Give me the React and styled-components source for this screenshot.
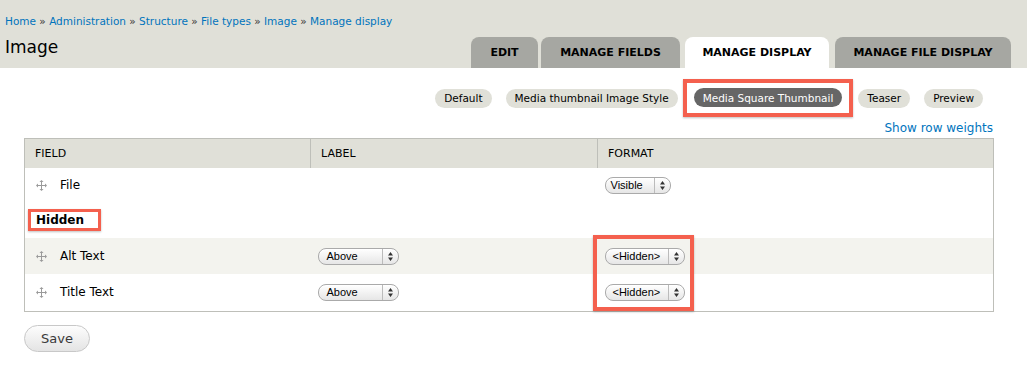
import React from "react";
import styled, {createGlobalStyle} from "styled-components";

const GlobalStyle = createGlobalStyle`
  body {
    margin: 0;
    background: #fff;
    font-family: "DejaVu Sans", Verdana, sans-serif;
    color: #000;
  }
`;

const Header = styled.header`
  background: #e0e0d8;
  height: 68px;
  padding-left: 5px;
  box-sizing: border-box;
`;

const Breadcrumb = styled.div`
  padding-top: 14px;
  font-size: 10.5px;
  line-height: 15px;
  color: #0074bd;

  span {
    color: #333;
  }
`;

const TitleRow = styled.div`
  display: flex;
  justify-content: space-between;
  margin-top: 8px;
  height: 31px;
`;

const Title = styled.h1`
  margin: 0;
  font-size: 17px;
  font-weight: normal;
  line-height: 20px;
`;

const Tabs = styled.nav`
  display: flex;
  align-items: flex-end;
  gap: 3px;
  padding-right: 16px;
`;

const Tab = styled.a`
  height: 31px;
  width: ${p => p.$w}px;
  box-sizing: border-box;
  display: flex;
  align-items: center;
  justify-content: center;
  border-radius: 8px 8px 0 0;
  background: ${p => p.$active ? "#fff" : "#a6a7a2"};
  font-size: 11px;
  font-weight: bold;
  color: #000;
  margin-left: ${p => p.$active ? 2 : 0}px;
  margin-right: ${p => p.$active ? 3 : 0}px;
`;

const Content = styled.main`
  padding: 11px 33px 0 24px;
`;

const SubTabs = styled.div`
  display: flex;
  justify-content: flex-end;
  align-items: center;
  padding-right: 4px;
`;

const Pill = styled.span`
  display: inline-flex;
  align-items: center;
  height: 19px;
  margin: 0 7px;
  padding: 0 9px;
  border-radius: 10px;
  background: ${p => p.$active ? "#666" : "#e0e0d8"};
  color: ${p => p.$active ? "#fff" : "#000"};
  font-size: 10.5px;
  white-space: nowrap;
`;

const Highlight = styled.div`
  display: flex;
  margin: 0 -2px;
  padding: 5px 0 6px;
  border: 4px solid #f4604e;
  box-shadow: 0 1px 2px rgba(0, 0, 0, 0.25);
`;

const WeightsRow = styled.div`
  display: flex;
  justify-content: flex-end;
  height: 21px;
  align-items: center;
  padding-right: 1px;
  font-size: 12px;
  color: #0074bd;
`;

const Table = styled.table`
  width: 970px;
  border-collapse: collapse;
  border: 1px solid #bebfb9;
  font-size: 12px;
`;

const Th = styled.th`
  height: 29px;
  padding: 0 10px;
  background: #e0e0d8;
  border-right: 1px solid #bebfb9;
  text-align: left;
  font-weight: normal;
  font-size: 11px;
  width: ${p => p.$w}px;
`;

const Row = styled.tr`
  background: ${p => p.$alt ? "#f3f3ee" : "#fff"};
  height: ${p => p.$h}px;
`;

const Td = styled.td`
  padding: 0 8px 0 9px;
  vertical-align: middle;
  position: relative;
`;

const SelectTd = styled(Td)`
  padding-left: 7px;
`;

const FieldName = styled.div`
  display: flex;
  align-items: center;
  gap: 13px;
  padding-left: 2px;
`;

const RegionLabel = styled.span`
  display: inline-block;
  margin-left: -6px;
  padding: 1px 14px 0 5px;
  border: 3px solid #f4604e;
  font-weight: bold;
  line-height: 15px;
  box-shadow: 0 1px 2px rgba(0, 0, 0, 0.25);
`;

const Select = styled.span`
  display: inline-flex;
  align-items: stretch;
  height: 17px;
  width: ${p => p.$w}px;
  box-sizing: border-box;
  border: 1px solid #aaa;
  border-radius: 8px;
  background: linear-gradient(#fff, #e6e6e6);
  font-family: "Liberation Sans", Arial, sans-serif;
  font-size: 11px;
  color: #000;
  box-shadow: inset 0 1px 0 #fff;
`;

const SelectValue = styled.span`
  flex: 1;
  display: flex;
  align-items: center;
  padding-left: ${p => p.$pad}px;
`;

const SelectArrows = styled.span`
  width: 15px;
  border-left: 1px solid #bbb;
  display: flex;
  align-items: center;
  justify-content: center;
`;

const HiddenBox = styled.div`
  position: absolute;
  left: -5px;
  top: -3px;
  width: 93px;
  height: 68px;
  border: 4px solid #f4604e;
  box-shadow: 0 1px 2px rgba(0, 0, 0, 0.25);
  pointer-events: none;
`;

const SaveButton = styled.button`
  margin-top: 13px;
  width: 66px;
  height: 27px;
  border: 1px solid #c8c8c8;
  border-radius: 14px;
  background: linear-gradient(#fdfdfd, #e4e4e4);
  font-family: "DejaVu Sans", Verdana, sans-serif;
  font-size: 13px;
  color: #3a3a3a;
  padding: 0;
`;

const DragIcon = () => (
    <svg width="11" height="11" viewBox="0 0 11 11">
        <g stroke="#9a9a9a" strokeWidth="1" fill="none">
            <path d="M5.5 1v9M1 5.5h9"/>
        </g>
        <g fill="#9a9a9a">
            <path d="M5.5 0l2 2h-4zM5.5 11l2-2h-4zM0 5.5l2-2v4zM11 5.5l-2-2v4z"/>
        </g>
    </svg>
);

const UpDown = () => (
    <svg width="5" height="9" viewBox="0 0 5 9">
        <path d="M2.5 0L5 3.5H0zM2.5 9L5 5.5H0z" fill="#333"/>
    </svg>
);

const Dropdown = ({value, width, pad = 8}) => (
    <Select $w={width}>
        <SelectValue $pad={pad}>{value}</SelectValue>
        <SelectArrows><UpDown/></SelectArrows>
    </Select>
);

const crumbs = ["Home", "Administration", "Structure", "File types", "Image", "Manage display"];

export default function App() {
    return (
        <>
            <GlobalStyle/>
            <Header>
                <Breadcrumb>
                    {crumbs.map((c, i) => (
                        <React.Fragment key={c}>
                            {i > 0 && <span> » </span>}
                            {c}
                        </React.Fragment>
                    ))}
                </Breadcrumb>
                <TitleRow>
                    <Title>Image</Title>
                    <Tabs>
                        <Tab $w={67}>EDIT</Tab>
                        <Tab $w={139}>MANAGE FIELDS</Tab>
                        <Tab $w={144} $active>MANAGE DISPLAY</Tab>
                        <Tab $w={176}>MANAGE FILE DISPLAY</Tab>
                    </Tabs>
                </TitleRow>
            </Header>
            <Content>
                <SubTabs>
                    <Pill>Default</Pill>
                    <Pill>Media thumbnail Image Style</Pill>
                    <Highlight>
                        <Pill $active>Media Square Thumbnail</Pill>
                    </Highlight>
                    <Pill>Teaser</Pill>
                    <Pill>Preview</Pill>
                </SubTabs>
                <WeightsRow>Show row weights</WeightsRow>
                <Table>
                    <thead>
                    <tr>
                        <Th $w={265}>FIELD</Th>
                        <Th $w={266}>LABEL</Th>
                        <Th>FORMAT</Th>
                    </tr>
                    </thead>
                    <tbody>
                    <Row $h={34}>
                        <Td><FieldName><DragIcon/>File</FieldName></Td>
                        <Td/>
                        <SelectTd><Dropdown value="Visible" width={66} pad={5}/></SelectTd>
                    </Row>
                    <Row $h={36}>
                        <Td colSpan={3}><RegionLabel>Hidden</RegionLabel></Td>
                    </Row>
                    <Row $h={36} $alt>
                        <Td><FieldName><DragIcon/>Alt Text</FieldName></Td>
                        <SelectTd><Dropdown value="Above" width={81}/></SelectTd>
                        <SelectTd>
                            <Dropdown value="<Hidden>" width={80} pad={7}/>
                            <HiddenBox/>
                        </SelectTd>
                    </Row>
                    <Row $h={37}>
                        <Td><FieldName><DragIcon/>Title Text</FieldName></Td>
                        <SelectTd><Dropdown value="Above" width={81}/></SelectTd>
                        <SelectTd><Dropdown value="<Hidden>" width={80} pad={7}/></SelectTd>
                    </Row>
                    </tbody>
                </Table>
                <SaveButton>Save</SaveButton>
            </Content>
        </>
    );
}
